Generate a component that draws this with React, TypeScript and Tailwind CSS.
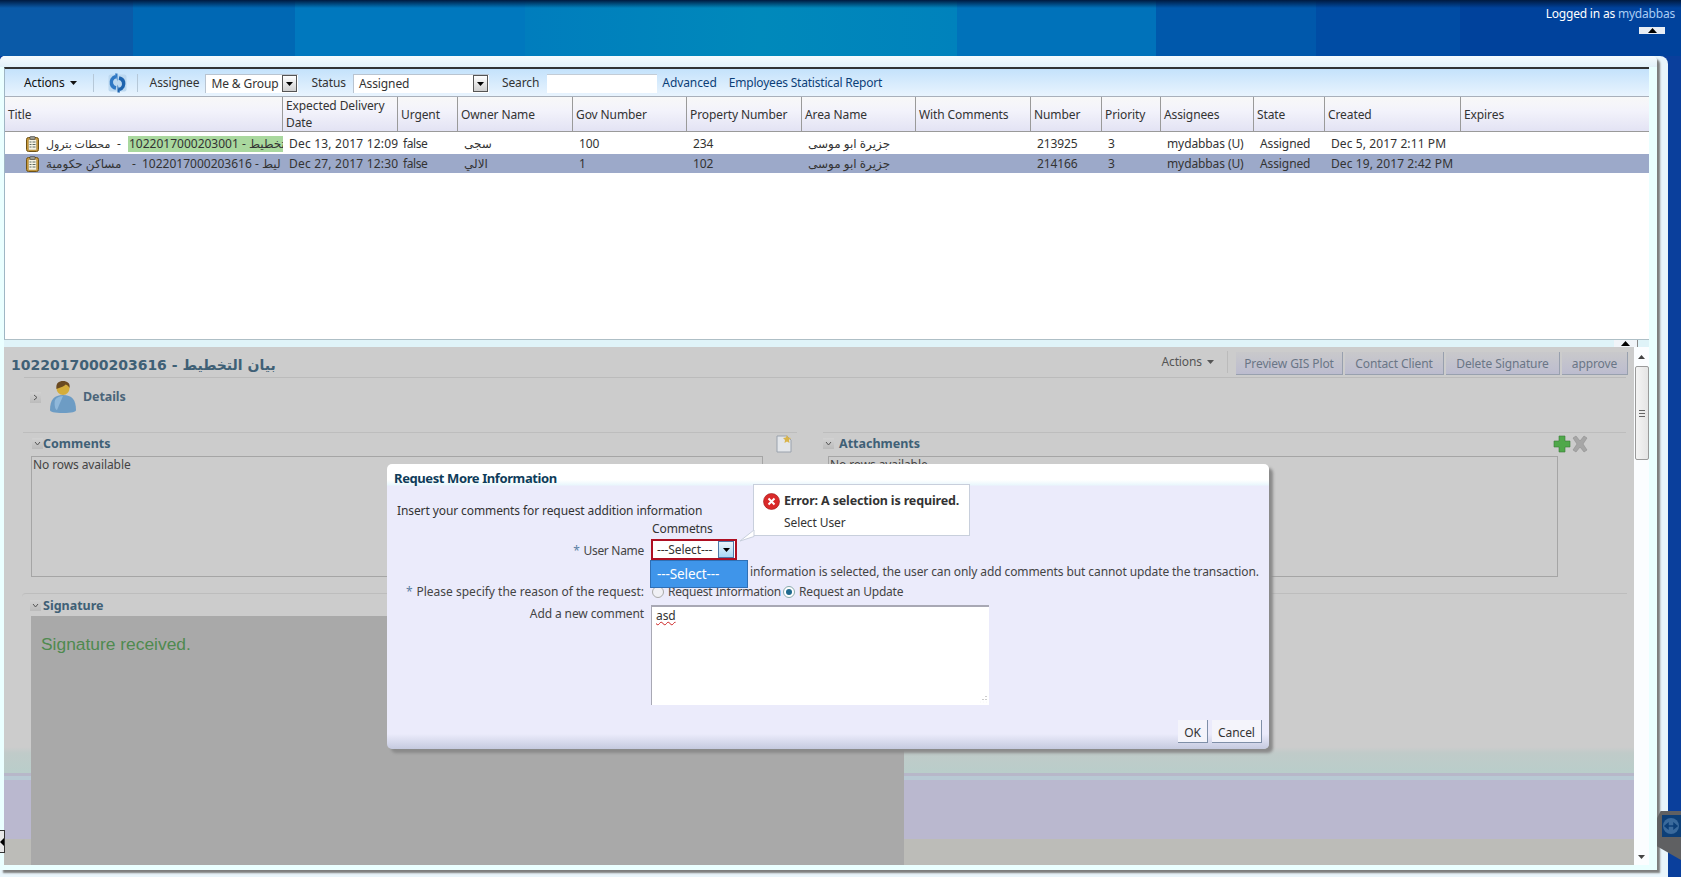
const F = "[font-family:'Noto_Sans','DejaVu_Sans',sans-serif]";
const GRID = "grid grid-cols-[278px_115px_60px_115px_114px_115px_114px_115px_71px_59px_93px_71px_136px_189px]";

function Caret() {
  return <svg width="7" height="4" viewBox="0 0 7 4" className="inline-block"><path d="M0 0h7L3.5 4z" fill="currentColor" /></svg>;
}

function CaretUp() {
  return <svg width="9" height="5" viewBox="0 0 9 5" className="inline-block"><path d="M4.500 0L9 5H0z" fill="currentColor" /></svg>;
}

function TaskIcon() {
  return (
    <svg width="13" height="16" viewBox="0 0 13 16" className="shrink-0">
      <rect x="0.5" y="1.5" width="12" height="14" rx="2" fill="#c99a3c" stroke="#6e5216" />
      <rect x="2.500" y="3.500" width="8" height="10.500" fill="#f6f3e4" stroke="#a58a4a" strokeWidth="0.5" />
      <rect x="4" y="0.5" width="5" height="3" rx="0.5" fill="#9a9a90" stroke="#444" strokeWidth="0.6" />
      <path d="M3.500 6h2M6.500 6h3M3.500 8.500h2M6.500 8.500h3M3.500 11h2M6.500 11h3" stroke="#5f6b62" strokeWidth="1" />
    </svg>
  );
}

function SelectBox({ label, w }: { label: string; w: string }) {
  return (
    <div className={`${w} h-[19px] bg-white border-t border-l border-[#b9c4d0] flex items-center justify-between pl-[5px]`}>
      <span>{label}</span>
      <span className="w-[15px] h-[17px] mr-[1px] border border-[#555] bg-[linear-gradient(#ffffff,#cfcfcf)] flex items-center justify-center text-black"><Caret /></span>
    </div>
  );
}

function Toggle({ open = true }: { open?: boolean }) {
  return (
    <span className="w-[11px] h-[11px] bg-[linear-gradient(#d2d2d2,#bbbbbb)] flex items-center justify-center shrink-0">
      <svg width="7" height="7" viewBox="0 0 7 7" fill="none" stroke="#555" strokeWidth="1">
        <path d={open ? "M1 2l2.5 3L6 2" : "M2 1l3 2.5L2 6"} />
      </svg>
    </span>
  );
}

const rows = [
  { sel: false, a: "محطات بترول", num: "1022017000203001 - ", highlight: true, date: "Dec 13, 2017 12:09", owner: "سجى", gov: "100", prop: "234", n: "213925", created: "Dec 5, 2017 2:11 PM", h: "h-[22px] pt-[1px]" },
  { sel: true, a: "مساكن حكومية", num: "1022017000203616 - ", highlight: false, date: "Dec 27, 2017 12:30", owner: "الالي", gov: "1", prop: "102", n: "214166", created: "Dec 19, 2017 2:42 PM", h: "h-[19px]" },
];

const headers = ["Title", "Expected Delivery Date", "Urgent", "Owner Name", "Gov Number", "Property Number", "Area Name", "With Comments", "Number", "Priority", "Assignees", "State", "Created", "Expires"];

function Cell({ children, extra = "" }: { children?: React.ReactNode; extra?: string }) {
  return <div className={`pl-[6px] overflow-hidden whitespace-nowrap flex items-center ${extra}`}>{children}</div>;
}

export default function App() {
  return (
    <div className={`relative w-[1681px] h-[877px] overflow-hidden flex flex-col bg-[#0a3f9c] text-[12px] leading-[16px] tracking-[-0.1px] text-[#333] ${F}`}>
      {/* top banner */}
      <header className="h-[56px] shrink-0 bg-[linear-gradient(#001a40_0px,rgba(0,30,70,0)_8px),linear-gradient(90deg,#0a5aa8_0_133px,#0068b4_133px_295px,#0078be_295px_525px,#007dbd_525px,#0089bb_760px,#0082bc_957px,#0072ba_957px_1156px,#0058ab_1156px_1316px,#004ca4_1316px_1460px,#00429c_1460px)] flex flex-col items-end pr-[6px] pt-[6px]">
        <div className="text-white text-[12px] leading-[16px] tracking-[-0.2px]">Logged in as <span className="text-[#a9cdf5]">mydabbas</span></div>
        <div className="mt-[5px] mr-[10px] w-[26px] h-[7px] bg-[#e8eef5] flex items-center justify-center text-black"><CaretUp /></div>
      </header>

      {/* outer frame */}
      <div className="flex-1 w-[1668px] bg-[#e9f5fb] rounded-tl-[5px] rounded-tr-[8px] pb-[4px]">
        <div className="w-[1657px] h-[814px] bg-[linear-gradient(#f6fbfe_0,#e3f1f9_11px,#eaffff_11px)] rounded-tl-[5px] rounded-tr-[5px] shadow-[3px_3px_2px_#7d7d7d] pt-[11px] pl-[4px] flex flex-col">
          {/* upper pane */}
          <div className="w-[1645px] h-[273px] shrink-0 bg-white border-t-2 border-t-[#333] border-l border-l-[#9fb6c4] border-b border-b-[#aebfc6] flex flex-col">
            {/* toolbar */}
            <div className="h-[28px] shrink-0 bg-[linear-gradient(#c4e2fb,#e9f4fe)] flex items-center border-b border-[#a9b0bb] pt-[1px]">
              <span className="ml-[19px] text-[#111] flex items-center gap-[5px]">Actions <Caret /></span>
              <span className="ml-[16px] w-px h-[18px] bg-[#b6c8d8]" />
              <svg width="19" height="20" viewBox="0 0 19 20" className="ml-[14px]">
                <rect x="0.500" y="1.500" width="18" height="17" rx="2" fill="#bcd8f0" />
                <path d="M8 3.500C4 4.500 2.800 8 3.500 11c.5 2 2 3.500 4.500 4" fill="none" stroke="#2f78c4" strokeWidth="3.500" />
                <path d="M7 0.500h2.500v8z" fill="#2f78c4" />
                <path d="M11 16.500c4-1 5.200-4.500 4.500-7.500-.5-2-2-3.500-4.500-4" fill="none" stroke="#1d63ae" strokeWidth="3.500" />
                <path d="M12 19.500H9.500v-8z" fill="#1d63ae" />
              </svg>
              <span className="ml-[10px] w-px h-[18px] bg-[#b6c8d8]" />
              <span className="ml-[12px]">Assignee</span>
              <div className="ml-[6px]"><SelectBox label="Me & Group" w="w-[93px]" /></div>
              <span className="ml-[13px]">Status</span>
              <div className="ml-[7px]"><SelectBox label="Assigned" w="w-[136px]" /></div>
              <span className="ml-[13px]">Search</span>
              <div className="ml-[8px] w-[110px] h-[19px] bg-white border-t border-[#c3ccd6]" />
              <a className="ml-[5px] text-[#0c3f78]">Advanced</a>
              <a className="ml-[12px] text-[#0c3f78] tracking-[-0.2px]">Employees Statistical Report</a>
            </div>
            {/* header */}
            <div className={`${GRID} h-[35px] shrink-0 border-b border-[#9a9a9a] bg-[linear-gradient(#f8f8f8,#f3f3fb_40%,#e3e3f4)]`}>
              {headers.map((h, i) => (
                <div key={h} className={`pl-[3px] flex items-center leading-[17px] ${i < 13 ? "border-r border-[#9a9a9a]" : ""}`}>{h}</div>
              ))}
            </div>
            {/* rows */}
            {rows.map((r) => (
              <div key={r.n} className={`${GRID} ${r.h} shrink-0 ${r.sel ? "bg-[#9ca9c9]" : "bg-white"}`}>
                <div className="pl-[21px] overflow-hidden whitespace-nowrap flex items-center tracking-[0px]">
                  <TaskIcon />
                  <span className={`ml-[7px] shrink-0 ${r.highlight ? "w-[71px] text-[11px]" : "w-[86px]"}`}>{r.a}</span>
                  <span className={`shrink-0 ${r.highlight ? "w-[11px]" : "w-[10px]"}`}>-</span>
                  {r.highlight ? (
                    <span className="bg-[#a9d89e] flex pl-[1px] shrink-0 whitespace-pre">{r.num}<span>تخطيط</span></span>
                  ) : (
                    <span className="flex shrink-0 whitespace-pre">{r.num}<span>ليط</span></span>
                  )}
                </div>
                <Cell extra="tracking-[0.2px]">{r.date}</Cell>
                <Cell extra="!pl-[5px] tracking-[-0.4px]">false</Cell>
                <Cell>{r.owner}</Cell>
                <Cell>{r.gov}</Cell>
                <Cell>{r.prop}</Cell>
                <Cell>جزيرة ابو موسى</Cell>
                <Cell />
                <Cell>{r.n}</Cell>
                <Cell>3</Cell>
                <Cell>mydabbas (U)</Cell>
                <Cell>Assigned</Cell>
                <Cell extra="tracking-[0.1px]">{r.created}</Cell>
                <Cell />
              </div>
            ))}
          </div>

          {/* splitter */}
          <div className="w-[1645px] h-[7px] shrink-0 bg-[#dff3f8] flex justify-end pr-[11px]">
            <div className="w-[24px] h-[7px] bg-[#f0f4f8] border-r border-[#888] flex items-center justify-center text-black"><CaretUp /></div>
          </div>

          {/* lower pane */}
          <div className="h-[518px] shrink-0 flex w-[1645px]">
            <div className="w-[1630px] h-[518px] bg-[linear-gradient(#cccccc_0,#cccccc_400px,#c0cbc9_406px,#b9cdca_426px,#b7b7c9_426px,#b7b7c9_429px,#b8c9d4_429px,#b8c9d4_433px,#bab8cf_433px,#bab8cf_492px,#bcbcb8_492px)] text-[#444]">
              <div className="h-[30px] flex items-center justify-between pl-[7px] pr-[6px]">
                <h1 className="text-[14px] mt-[5px] font-bold text-[#3f6076] [font-family:'DejaVu_Sans',sans-serif] tracking-[-0.15px]">1022017000203616 - بيان التخطيط</h1>
                <div className="flex items-center">
                  <span className="flex items-center gap-[5px] text-[#555]">Actions <Caret /></span>
                  <span className="ml-[13px] mr-[8px] w-px h-[22px] bg-[#bbb]" />
                  <div className="flex gap-[2px] mt-[3px] text-[#6a7686]">
                    <button className="w-[107px] h-[23px] pt-[1px] bg-[linear-gradient(#c9c9cb,#bcbccf)] border-b border-r border-[#98a0ae]">Preview GIS Plot</button>
                    <button className="w-[99px] h-[23px] pt-[1px] bg-[linear-gradient(#c9c9cb,#bcbccf)] border-b border-r border-[#98a0ae]">Contact Client</button>
                    <button className="w-[114px] h-[23px] pt-[1px] bg-[linear-gradient(#c9c9cb,#bcbccf)] border-b border-r border-[#98a0ae]">Delete Signature</button>
                    <button className="w-[66px] h-[23px] pt-[1px] bg-[linear-gradient(#c9c9cb,#bcbccf)] border-b border-r border-[#98a0ae]">approve</button>
                  </div>
                </div>
              </div>
              <div className="ml-[20px] mr-[8px] border-b border-[#bbbbbb]" />
              <div className="h-[54px] flex pl-[26px] pt-[2px]">
                <div className="mt-[12px]"><Toggle open={false} /></div>
                <svg width="28" height="33" viewBox="0 0 28 33" className="ml-[8px]">
                  <path d="M1 30c0-10 4-15 13-15s13 5 13 15c0 2-4 3-13 3S1 32 1 30z" fill="#6d9cc4" />
                  <path d="M6 20c2-3 5-4 8-4l-6 14c-2 0-3-6-2-10z" fill="#8fb8da" />
                  <circle cx="14" cy="8.500" r="6.500" fill="#d4ad3a" />
                  <path d="M7.500 9C6.500 3 10 1 14 1s7.500 2 6.500 7c-1-2-2-3-4-3.500-1 2-6 3-9 4.500z" fill="#6a4a22" />
                </svg>
                <span className="ml-[6px] mt-[9px] font-bold text-[12.500px] text-[#4a6479] tracking-[-0.1px]">Details</span>
              </div>
              {/* comments + attachments */}
              <div className="flex h-[145px]">
                <section className="ml-[19px] w-[774px]">
                  <div className="h-[24px] border-t border-[#bdbdbd] flex items-center pl-[9px] pb-[2px]">
                    <Toggle />
                    <span className="font-bold text-[12.500px] text-[#3f6076] tracking-[0px]">Comments</span>
                    <svg width="16" height="18" viewBox="0 0 16 18" className="ml-auto mr-[5px]">
                      <path d="M1 1h10l4 4v12H1z" fill="#e3e6ea" stroke="#9aa2ad" />
                      <path d="M11 0l1.200 2.600L15 3l-2 2 .5 3-2.500-1.500L8.500 8 9 5 7 3l2.800-.4z" fill="#d9b44a" />
                    </svg>
                  </div>
                  <div className="ml-[8px] w-[732px] h-[121px] border border-[#a5a5a5] pl-[1px]">No rows available</div>
                </section>
                <section className="ml-[26px] w-[803px]">
                  <div className="h-[24px] border-t border-[#bdbdbd] flex items-center pb-[2px]">
                    <Toggle />
                    <span className="ml-[5px] font-bold text-[12.500px] text-[#3f6076] tracking-[0px]">Attachments</span>
                    <div className="ml-auto mr-[37px] flex items-center">
                      <svg width="18" height="18" viewBox="0 0 18 18"><path d="M6 1h6v5h5v6h-5v5H6v-5H1V6h5z" fill="#4fa84a" stroke="#3a7a38" strokeWidth="0.6" /></svg>
                      <svg width="18" height="18" viewBox="0 0 18 18"><path d="M2 3l3-2 4 5 4-5 3 2-4 6 4 6-3 2-4-5-4 5-3-2 4-6z" fill="#a6a6a6" stroke="#8f8f8f" strokeWidth="0.6" /></svg>
                    </div>
                  </div>
                  <div className="ml-[5px] w-[730px] h-[121px] border border-[#a5a5a5] pl-[1px]">No rows available</div>
                </section>
              </div>
              {/* signature */}
              <section className="mt-[16px] ml-[18px] mr-[7px]">
                <div className="h-[23px] border-t border-[#bdbdbd] rounded-tl-[4px] flex items-center pl-[8px] pt-[1px]">
                  <Toggle />
                  <span className="ml-[2px] font-bold text-[12.500px] text-[#3f6076] tracking-[0px]">Signature</span>
                </div>
                <div className="ml-[9px] w-[873px] h-[249px] bg-[#a9a9a9] pl-[10px] pt-[18px] text-[17.4px] leading-[20px] tracking-normal text-[#4f8a4f] [font-family:'Liberation_Sans',sans-serif]">Signature received.</div>
              </section>
            </div>
            {/* scrollbar */}
            <div className="w-[15px] h-[518px] bg-[#fbfdff] flex flex-col items-center pt-[8px]">
              <span className="text-[#444] h-[6px] flex"><svg width="7" height="4" viewBox="0 0 7 4"><path d="M3.500 0L7 4H0z" fill="currentColor" /></svg></span>
              <div className="mt-[5px] w-[14px] h-[94px] bg-[linear-gradient(90deg,#f4f4f4,#e4e4e4)] border border-[#9a9a9a] rounded-[2px] flex items-center justify-center">
                <svg width="6" height="7" viewBox="0 0 6 7"><path d="M0 .500h6M0 3.500h6M0 6.500h6" stroke="#666" /></svg>
              </div>
              <span className="mt-auto mb-[6px] text-[#444] flex"><Caret /></span>
            </div>
          </div>
        </div>
      </div>

      {/* modal dialog */}
      <div role="dialog" className="absolute left-[387px] top-[464px] w-[882px] h-[285px] rounded-[5px] bg-[linear-gradient(#ffffff_0,#ffffff_16px,#e9f7fc_21px,#ebebfb_22px,#ebebfb_270px,#c5cadf_285px)] shadow-[4px_4px_3px_#8a8a8a] flex flex-col text-[#444]">
        <h2 className="pl-[7px] pt-[6px] h-[36px] text-[13px] leading-[16px] font-bold text-[#0e3c5a] tracking-[-0.4px]">Request More Information</h2>
        <p className="pl-[10px] mt-[3px] h-[16px] text-[#333]">Insert your comments for request addition information</p>
        <div className="pl-[265px] mt-[2px] h-[16px] text-[#333]">Commetns</div>
        <div className="flex mt-[2px] h-[22px]">
          <label className="w-[257px] text-right pt-[4px] tracking-[-0.3px]"><span className="text-[#5b7fa3] mr-[4px]">*</span>User Name</label>
          <div className="ml-[7px] w-[86px] h-[21px] border-2 border-[#ae0f22] bg-white flex items-center justify-between pl-[4px] pr-[1px] text-[#333]">
            <span>---Select---</span>
            <span className="w-[16px] h-[17px] border border-[#4e78a8] bg-[linear-gradient(#eaf5fc,#a9d8f4)] flex items-center justify-center text-black"><Caret /></span>
          </div>
        </div>
        <div className="pl-[363px] mt-[2px] h-[18px] flex items-center text-[#444] whitespace-nowrap">information is selected, the user can only add comments but cannot update the transaction.</div>
        <div className="flex mt-[2px] h-[18px] items-center">
          <label className="w-[257px] text-right tracking-[0px]"><span className="text-[#5b7fa3] mr-[4px]">*</span>Please specify the reason of the request:</label>
          <span className="ml-[8px] w-[12px] h-[12px] rounded-full border border-[#aaa] bg-[#f0f0f5]" />
          <span className="ml-[4px] tracking-[-0.2px]">Request Information</span>
          <span className="ml-[2px] w-[12px] h-[12px] rounded-full border border-[#8aa] bg-white flex items-center justify-center"><span className="w-[6px] h-[6px] rounded-full bg-[#1f6a8e]" /></span>
          <span className="ml-[4px] tracking-[-0.2px]">Request an Update</span>
        </div>
        <div className="flex mt-[4px]">
          <label className="w-[257px] text-right pt-[1px]">Add a new comment</label>
          <div className="relative ml-[7px] w-[338px] h-[100px] bg-white border-t-2 border-l border-[#a8a8b4] pl-[4px] pt-[1px] text-[#333]">
            <span className="underline decoration-wavy decoration-[#cc2222] decoration-1">asd</span>
            <svg width="8" height="8" viewBox="0 0 8 8" className="absolute right-[2px] bottom-[2px]"><path d="M7 1v1M7 4v1M4 4v1M7 7h.100M4 7h.100M1 7h.100" stroke="#999" /></svg>
          </div>
        </div>
        <div className="flex justify-end gap-[4px] pr-[7px] mt-[15px]">
          <button className="w-[30px] h-[23px] pt-[3px] bg-[#f4f4fb] border-r border-b border-[#7f8fa8] text-[#333]">OK</button>
          <button className="w-[50px] h-[23px] pt-[3px] bg-[#f4f4fb] border-r border-b border-[#7f8fa8] text-[#333]">Cancel</button>
        </div>

        {/* dropdown list */}
        <div className="absolute left-[263px] top-[96px] w-[98px] h-[28px] bg-[#3f95ea] border border-[#2f6fb5] flex items-center pl-[6px] text-white text-[13.500px]">---Select---</div>

        {/* error popup */}
        <div className="absolute left-[366px] top-[20px] w-[217px] h-[52px] bg-white border border-[#c8cfdc] pl-[9px] pt-[7px]">
          <div className="flex items-center h-[18px] whitespace-nowrap">
            <svg width="17" height="17" viewBox="0 0 17 17" className="shrink-0">
              <circle cx="8.500" cy="8.500" r="8" fill="#d92a2a" stroke="#9c1515" strokeWidth="0.6" />
              <path d="M5.500 5.500l6 6M11.500 5.500l-6 6" stroke="#fff" strokeWidth="2" />
            </svg>
            <span className="ml-[4px] font-bold text-[12.500px] tracking-[-0.15px] text-[#333]">Error: A selection is required.</span>
          </div>
          <div className="ml-[21px] mt-[5px] text-[#333]">Select User</div>
        </div>
        <svg width="16" height="12" viewBox="0 0 16 12" className="absolute left-[352px] top-[66px]">
          <path d="M15 0v6.500L1 11z" fill="#ffffff" stroke="#c8cfdc" />
        </svg>
      </div>

      {/* left edge arrow */}
      <div className="absolute left-0 top-[830px] w-[5px] h-[23px] bg-[#e8e8e8] border-r border-y border-[#333] flex items-center">
        <svg width="4" height="8" viewBox="0 0 4 8"><path d="M4 0v8L0 4z" fill="#000" /></svg>
      </div>

      {/* remote support tab */}
      <div className="absolute left-[1657px] top-[811px] w-[24px] h-[49px] bg-[#5f6062] [clip-path:polygon(15%_0,100%_0,100%_100%,0_72%,0_15%)] pl-[5px] pt-[4px]">
        <svg width="19" height="22" viewBox="0 0 19 22">
          <rect width="19" height="22" fill="#0c3f78" />
          <circle cx="9" cy="11" r="8" fill="#3a6a9c" />
          <path d="M3 11h12M3 11l3-2.500v5zM15 11l-3-2.500v5z" stroke="#0c3f78" strokeWidth="1.500" fill="#0c3f78" />
        </svg>
      </div>
    </div>
  );
}
